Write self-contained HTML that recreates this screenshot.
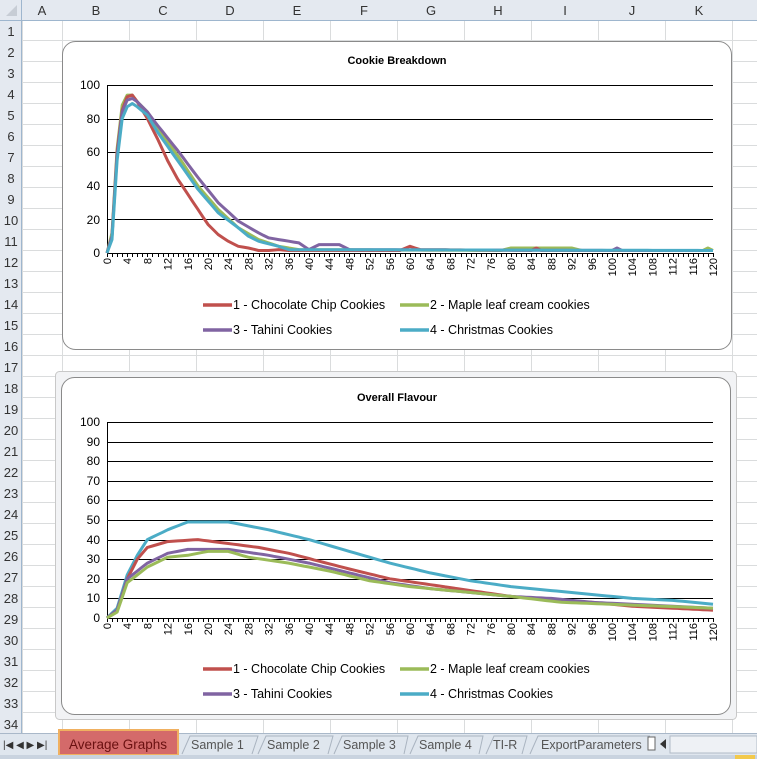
<!DOCTYPE html>
<html><head><meta charset="utf-8"><style>
body{margin:0;width:757px;height:759px;overflow:hidden;background:#fff;font-family:"Liberation Sans",sans-serif}
svg{display:block}
text{font-family:"Liberation Sans",sans-serif}
</style></head><body>
<svg id="s" width="757" height="759" viewBox="0 0 757 759" xmlns="http://www.w3.org/2000/svg">
<rect width="757" height="759" fill="#fff"/>
<g id="grid" stroke="#dadcdd" stroke-width="1"></g>
<rect x="0" y="0" width="757" height="20" fill="#e4e9f0"/>
<rect x="0" y="0" width="22" height="733" fill="#e4e9f0"/>
<line x1="0" y1="20.5" x2="757" y2="20.5" stroke="#9eb6ce"/>
<line x1="21.5" y1="0" x2="21.5" y2="733" stroke="#9eb6ce"/>
<polygon points="6,16 17,16 17,5" fill="#c7cdd5"/>
<g font-size="13" fill="#333" text-anchor="middle">
<text x="42" y="15">A</text><text x="96" y="15">B</text><text x="163" y="15">C</text><text x="230" y="15">D</text><text x="297" y="15">E</text><text x="364" y="15">F</text><text x="431" y="15">G</text><text x="498" y="15">H</text><text x="565" y="15">I</text><text x="632" y="15">J</text><text x="699" y="15">K</text>
</g>
<g font-size="13" fill="#333" text-anchor="middle">
<text x="11" y="36">1</text><text x="11" y="57">2</text><text x="11" y="78">3</text><text x="11" y="99">4</text><text x="11" y="120">5</text><text x="11" y="141">6</text><text x="11" y="162">7</text><text x="11" y="183">8</text><text x="11" y="204">9</text><text x="11" y="225">10</text><text x="11" y="246">11</text><text x="11" y="267">12</text><text x="11" y="288">13</text><text x="11" y="309">14</text><text x="11" y="330">15</text><text x="11" y="351">16</text><text x="11" y="372">17</text><text x="11" y="393">18</text><text x="11" y="414">19</text><text x="11" y="435">20</text><text x="11" y="456">21</text><text x="11" y="477">22</text><text x="11" y="498">23</text><text x="11" y="519">24</text><text x="11" y="540">25</text><text x="11" y="561">26</text><text x="11" y="582">27</text><text x="11" y="603">28</text><text x="11" y="624">29</text><text x="11" y="645">30</text><text x="11" y="666">31</text><text x="11" y="687">32</text><text x="11" y="708">33</text><text x="11" y="729">34</text>
</g>
<rect x="62.5" y="41.5" width="669" height="308" rx="13" fill="#fff" stroke="#8a8a8a"/>
<text x="397" y="64" font-size="11" font-weight="bold" text-anchor="middle">Cookie Breakdown</text>
<g id="c1"></g>
<g font-size="12" text-anchor="end" fill="#000">
<text x="100" y="89">100</text><text x="100" y="123">80</text><text x="100" y="156">60</text><text x="100" y="190">40</text><text x="100" y="224">20</text><text x="100" y="257">0</text>
</g>
<rect x="55.5" y="371.5" width="681" height="348" rx="4" fill="#f2f3f5" stroke="#c8c8c8"/>
<rect x="61.5" y="377.5" width="669" height="337" rx="13" fill="#fff" stroke="#8a8a8a"/>
<text x="397" y="401" font-size="11" font-weight="bold" text-anchor="middle">Overall Flavour</text>
<g id="c2"></g>
<g font-size="12" text-anchor="end" fill="#000">
<text x="100" y="426">100</text><text x="100" y="446">90</text><text x="100" y="465">80</text><text x="100" y="485">70</text><text x="100" y="504">60</text><text x="100" y="524">50</text><text x="100" y="544">40</text><text x="100" y="563">30</text><text x="100" y="583">20</text><text x="100" y="602">10</text><text x="100" y="622">0</text>
</g>
<g font-size="11" text-anchor="end" fill="#000">
<g transform="translate(0,258)">
<text transform="translate(111,0) rotate(-90)">0</text><text transform="translate(131.2,0) rotate(-90)">4</text><text transform="translate(151.4,0) rotate(-90)">8</text><text transform="translate(171.6,0) rotate(-90)">12</text><text transform="translate(191.8,0) rotate(-90)">16</text><text transform="translate(212,0) rotate(-90)">20</text><text transform="translate(232.2,0) rotate(-90)">24</text><text transform="translate(252.4,0) rotate(-90)">28</text><text transform="translate(272.6,0) rotate(-90)">32</text><text transform="translate(292.8,0) rotate(-90)">36</text><text transform="translate(313,0) rotate(-90)">40</text><text transform="translate(333.2,0) rotate(-90)">44</text><text transform="translate(353.4,0) rotate(-90)">48</text><text transform="translate(373.6,0) rotate(-90)">52</text><text transform="translate(393.8,0) rotate(-90)">56</text><text transform="translate(414,0) rotate(-90)">60</text><text transform="translate(434.2,0) rotate(-90)">64</text><text transform="translate(454.4,0) rotate(-90)">68</text><text transform="translate(474.6,0) rotate(-90)">72</text><text transform="translate(494.8,0) rotate(-90)">76</text><text transform="translate(515,0) rotate(-90)">80</text><text transform="translate(535.2,0) rotate(-90)">84</text><text transform="translate(555.4,0) rotate(-90)">88</text><text transform="translate(575.6,0) rotate(-90)">92</text><text transform="translate(595.8,0) rotate(-90)">96</text><text transform="translate(616,0) rotate(-90)">100</text><text transform="translate(636.2,0) rotate(-90)">104</text><text transform="translate(656.4,0) rotate(-90)">108</text><text transform="translate(676.6,0) rotate(-90)">112</text><text transform="translate(696.8,0) rotate(-90)">116</text><text transform="translate(717,0) rotate(-90)">120</text>
</g>
<g transform="translate(0,623)">
<text transform="translate(111,0) rotate(-90)">0</text><text transform="translate(131.2,0) rotate(-90)">4</text><text transform="translate(151.4,0) rotate(-90)">8</text><text transform="translate(171.6,0) rotate(-90)">12</text><text transform="translate(191.8,0) rotate(-90)">16</text><text transform="translate(212,0) rotate(-90)">20</text><text transform="translate(232.2,0) rotate(-90)">24</text><text transform="translate(252.4,0) rotate(-90)">28</text><text transform="translate(272.6,0) rotate(-90)">32</text><text transform="translate(292.8,0) rotate(-90)">36</text><text transform="translate(313,0) rotate(-90)">40</text><text transform="translate(333.2,0) rotate(-90)">44</text><text transform="translate(353.4,0) rotate(-90)">48</text><text transform="translate(373.6,0) rotate(-90)">52</text><text transform="translate(393.8,0) rotate(-90)">56</text><text transform="translate(414,0) rotate(-90)">60</text><text transform="translate(434.2,0) rotate(-90)">64</text><text transform="translate(454.4,0) rotate(-90)">68</text><text transform="translate(474.6,0) rotate(-90)">72</text><text transform="translate(494.8,0) rotate(-90)">76</text><text transform="translate(515,0) rotate(-90)">80</text><text transform="translate(535.2,0) rotate(-90)">84</text><text transform="translate(555.4,0) rotate(-90)">88</text><text transform="translate(575.6,0) rotate(-90)">92</text><text transform="translate(595.8,0) rotate(-90)">96</text><text transform="translate(616,0) rotate(-90)">100</text><text transform="translate(636.2,0) rotate(-90)">104</text><text transform="translate(656.4,0) rotate(-90)">108</text><text transform="translate(676.6,0) rotate(-90)">112</text><text transform="translate(696.8,0) rotate(-90)">116</text><text transform="translate(717,0) rotate(-90)">120</text>
</g>
</g>
<g font-size="12.5" fill="#000">
<line x1="203" y1="305" x2="232" y2="305" stroke="#c0504d" stroke-width="3.5"/><text x="233" y="309">1 - Chocolate Chip Cookies</text>
<line x1="400" y1="305" x2="429" y2="305" stroke="#9bbb59" stroke-width="3.5"/><text x="430" y="309">2 - Maple leaf cream cookies</text>
<line x1="203" y1="330" x2="232" y2="330" stroke="#8064a2" stroke-width="3.5"/><text x="233" y="334">3 - Tahini Cookies</text>
<line x1="400" y1="330" x2="429" y2="330" stroke="#4bacc6" stroke-width="3.5"/><text x="430" y="334">4 - Christmas Cookies</text>
<line x1="203" y1="669" x2="232" y2="669" stroke="#c0504d" stroke-width="3.5"/><text x="233" y="673">1 - Chocolate Chip Cookies</text>
<line x1="400" y1="669" x2="429" y2="669" stroke="#9bbb59" stroke-width="3.5"/><text x="430" y="673">2 - Maple leaf cream cookies</text>
<line x1="203" y1="694" x2="232" y2="694" stroke="#8064a2" stroke-width="3.5"/><text x="233" y="698">3 - Tahini Cookies</text>
<line x1="400" y1="694" x2="429" y2="694" stroke="#4bacc6" stroke-width="3.5"/><text x="430" y="698">4 - Christmas Cookies</text>
</g>
<rect x="0" y="733" width="757" height="22" fill="#dfe6ee"/>
<line x1="0" y1="733.5" x2="757" y2="733.5" stroke="#a9b8c9"/>
<g fill="#333" font-size="10"><text x="3" y="748">|◀ ◀ ▶ ▶|</text></g>
<rect x="59" y="730" width="119" height="25" fill="#d46a6a" stroke="#f0b060" stroke-width="2"/>
<text x="69" y="749" font-size="13.5" fill="#6a1010">Average Graphs</text>
<g font-size="12.5" fill="#555">
<path d="M182,754 L190,736 L258,736 L252,754 M258,754 L266,736 L333,736 L328,754 M334,754 L342,736 L408,736 L404,754 M410,754 L418,736 L483,736 L479,754 M486,754 L494,736 L527,736 L522,754 M530,754 L538,736 L650,736" fill="none" stroke="#aab4c0"/>
<text x="191" y="749">Sample 1</text><text x="267" y="749">Sample 2</text><text x="343" y="749">Sample 3</text><text x="419" y="749">Sample 4</text><text x="493" y="749">TI-R</text><text x="541" y="749">ExportParameters</text>
</g>
<rect x="648" y="737" width="7" height="13" fill="#fff" stroke="#666"/>
<polygon points="660,744 666,739 666,749" fill="#333"/>
<rect x="670" y="736" width="87" height="17" fill="#eef1f5" stroke="#b0bac6"/>
<rect x="0" y="755" width="757" height="4" fill="#c9d3df"/>
<rect x="735" y="755" width="20" height="4" fill="#f2c94c"/>
</svg>
<script>
var NS="http://www.w3.org/2000/svg";
function el(p,t,a){var e=document.createElementNS(NS,t);for(var k in a)e.setAttribute(k,a[k]);p.appendChild(e);return e;}
var g=document.getElementById('grid');
[22,62,129,196,263,330,397,464,531,598,665,732].forEach(function(x){el(g,'line',{x1:x+.5,y1:20,x2:x+.5,y2:733});});
for(var r=1;r<=34;r++){var y=20+r*21-0.5;el(g,'line',{x1:22,y1:y,x2:757,y2:y});}
function X(t){return 107+t*5.05;}
function interp(pts,t){for(var i=0;i<pts.length-1;i++){if(t>=pts[i][0]&&t<=pts[i+1][0]){var a=pts[i],b=pts[i+1];return a[1]+(b[1]-a[1])*(t-a[0])/(b[0]-a[0]);}}return pts[pts.length-1][1];}
function chart(id,y0,yscale,max,step,series){
 var c=document.getElementById(id);
 for(var v=step;v<=max;v+=step){var y=Math.round(y0-v*yscale)+.5;el(c,'line',{x1:107,y1:y,x2:713,y2:y,stroke:'#000','stroke-width':1});}
 el(c,'line',{x1:107.5,y1:y0-max*yscale,x2:107.5,y2:y0+4,stroke:'#000'});
 el(c,'line',{x1:107,y1:y0+.5,x2:713,y2:y0+.5,stroke:'#000'});
 for(var t=0;t<=120;t++){var x=Math.round(X(t))+.5;el(c,'line',{x1:x,y1:y0,x2:x,y2:y0+4,stroke:'#000'});}
 series.forEach(function(s){var d='';for(var t=0;t<=120;t++){var v=interp(s[1],t);d+=(t?' ':'')+X(t).toFixed(1)+','+(y0-v*yscale).toFixed(1);}
  el(c,'polyline',{points:d,fill:'none',stroke:s[0],'stroke-width':3,'stroke-linejoin':'round'});});
}
chart('c1',253,1.68,100,20,[
['#9bbb59',[[0,0],[1,12],[2,62],[3,88],[4,94],[5,94],[6,90],[8,84],[10,74],[14,58],[18,40],[22,26],[26,15],[30,8],[34,4],[38,2],[78,1.5],[80,3],[92,3],[94,1.5],[118,1.5],[119,3],[120,1.5]]],
['#c0504d',[[0,0],[1,10],[2,60],[3,85],[4,93],[5,94],[6,90],[8,80],[10,68],[12,55],[14,44],[16,35],[18,26],[20,17],[22,11],[24,7],[26,4],[28,3],[30,1.5],[32,1.5],[34,2],[36,1.5],[58,1.5],[60,4],[62,2],[84,1.5],[85,3],[86,1.5],[120,1.5]]],
['#8064a2',[[0,0],[1,10],[2,58],[3,84],[4,91],[5,92],[6,90],[8,84],[10,76],[14,61],[18,45],[22,30],[26,19],[30,12],[32,9],[34,8],[38,6],[40,2],[42,5],[46,5],[48,2],[100,1.5],[101,3],[102,1.5],[120,1.5]]],
['#4bacc6',[[0,0],[1,8],[2,55],[3,80],[4,87],[5,89],[6,87],[8,82],[10,72],[14,55],[18,38],[22,24],[26,15],[28,10],[30,7],[34,4],[36,2],[120,1.5]]]
]);
chart('c2',618,1.96,100,10,[
['#4bacc6',[[0,0],[2,5],[4,22],[6,32],[8,40],[12,45],[16,49],[20,49],[24,49],[28,47],[32,45],[40,40],[48,34],[56,28],[64,23],[72,19],[80,16],[88,14],[96,12],[104,10],[112,9],[120,7]]],
['#c0504d',[[0,0],[2,4],[4,20],[6,30],[8,36],[12,39],[18,40],[24,38],[30,36],[36,33],[42,29],[48,25],[56,20],[64,17],[72,14],[80,11],[88,9],[96,8],[104,6],[112,5],[120,4]]],
['#8064a2',[[0,0],[2,4],[4,20],[8,28],[12,33],[16,35],[24,35],[32,32],[40,28],[48,23],[56,18],[64,15],[72,13],[80,11],[88,10],[96,8],[104,7],[112,6],[120,5]]],
['#9bbb59',[[0,0],[2,3],[4,18],[8,26],[12,31],[16,32],[20,34],[24,34],[28,31],[36,28],[44,24],[52,19],[60,16],[72,13],[80,11],[90,8],[100,7],[110,6],[120,5]]]
]);
</script>
</body></html>
